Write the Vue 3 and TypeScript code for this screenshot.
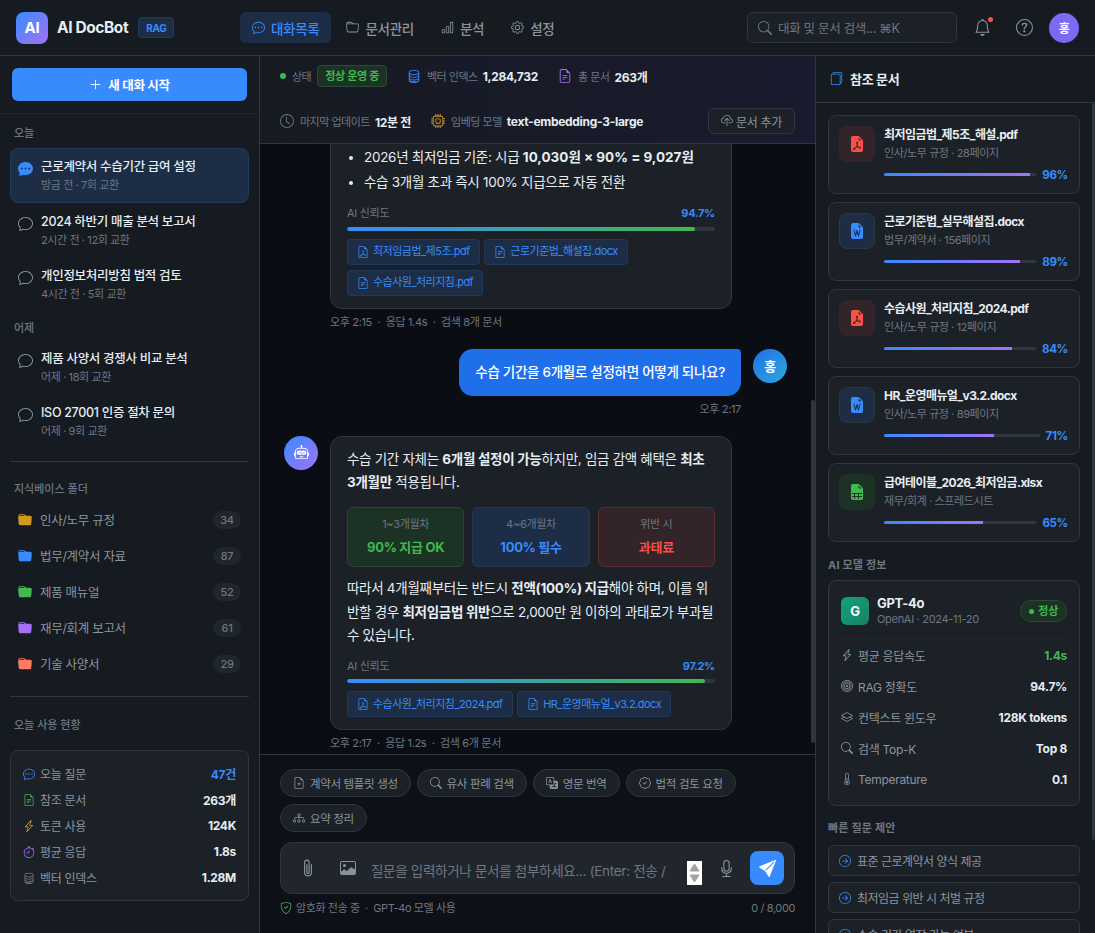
<template>
  <div class="app">
    <header class="topbar">
      <div class="brand">
        <div class="logo">AI</div>
        <span class="brand-name">AI DocBot</span>
        <span class="brand-tag">RAG</span>
      </div>
      <nav class="nav">
        <a v-for="n in navItems" :key="n.label" class="nav-item" :class="{ active: n.active }">
          <Icon :name="n.icon" />{{ n.label }}
        </a>
      </nav>
      <div class="top-right">
        <div class="search">
          <Icon name="search" />
          <span>대화 및 문서 검색... ⌘K</span>
        </div>
        <button class="icon-btn bell"><Icon name="bell" /><i class="bell-dot"></i></button>
        <button class="icon-btn"><Icon name="question" /></button>
        <div class="user-avatar">홍</div>
      </div>
    </header>

    <div class="body">
      <aside class="sidebar">
        <div class="new-wrap">
          <button class="new-btn"><Icon name="plus" />새 대화 시작</button>
        </div>
        <div class="side-content">
          <template v-for="(g, i) in chatGroups" :key="g.label">
            <div class="side-label" :class="{ later: i > 0 }">{{ g.label }}</div>
            <div
              v-for="c in g.items"
              :key="c.title"
              class="chat-item"
              :class="{ active: c.active }"
            >
              <Icon :name="c.active ? 'chatFill' : 'chat'" class="chat-ico" />
              <div class="chat-text">
                <div class="chat-title">{{ c.title }}</div>
                <div class="chat-sub">{{ c.sub }}</div>
              </div>
            </div>
          </template>

          <div class="side-divider first"></div>
          <div class="side-label folder-label">지식베이스 폴더</div>
          <div v-for="f in folders" :key="f.name" class="folder">
            <Icon name="folderFill" :style="{ color: f.color }" />
            <span class="folder-name">{{ f.name }}</span>
            <span class="folder-count">{{ f.count }}</span>
          </div>

          <div class="side-divider"></div>
          <div class="side-label usage-label">오늘 사용 현황</div>
          <div class="usage">
            <div v-for="u in usage" :key="u.label" class="usage-row">
              <Icon :name="u.icon" :style="{ color: u.color }" />
              <span class="usage-label-text">{{ u.label }}</span>
              <b :class="{ blue: u.blue }">{{ u.value }}</b>
            </div>
          </div>
        </div>
      </aside>

      <main class="center">
        <div class="status">
          <div class="st-item">
            <i class="st-dot"></i>
            <span class="st-label">상태</span>
            <span class="st-badge">정상 운영 중</span>
          </div>
          <div class="st-item">
            <Icon name="database" class="c-blue" />
            <span class="st-label">벡터 인덱스</span>
            <b>1,284,732</b>
          </div>
          <div class="st-item">
            <Icon name="fileText" class="c-purple" />
            <span class="st-label">총 문서</span>
            <b>263개</b>
          </div>
          <div class="st-item">
            <Icon name="clock" class="c-grey" />
            <span class="st-label">마지막 업데이트</span>
            <b>12분 전</b>
          </div>
          <div class="st-item">
            <Icon name="cpu" class="c-orange" />
            <span class="st-label">임베딩 모델</span>
            <b>text-embedding-3-large</b>
          </div>
          <button class="add-doc"><Icon name="cloudUp" />문서 추가</button>
        </div>

        <div class="chat-wrap">
          <div ref="chatEl" class="chat">
            <div class="msg user">
              <div class="msg-col">
                <div class="bubble-user">근로계약서에 수습기간을 넣을 때 급여는 얼마까지 낮출 수 있나요?</div>
                <div class="meta">오후 2:14</div>
              </div>
              <div class="avatar user-av">홍</div>
            </div>

            <div class="msg">
              <div class="avatar ai-av"><Icon name="robot" /></div>
              <div class="msg-col">
                <div class="bubble">
                  <p>수습기간 중 급여는 <strong>최저임금의 90%</strong>까지 감액할 수 있습니다. 다만 다음 조건을 모두 충족해야 합니다.</p>
                  <ul>
                    <li>1년 이상의 기간을 정한 근로계약일 것</li>
                    <li>단순노무직종에 해당하지 않을 것</li>
                    <li>수습 시작일로부터 3개월 이내일 것</li>
                    <li>2026년 최저임금 기준: 시급 <strong class="calc">10,030원 × 90% = 9,027원</strong></li>
                    <li>수습 3개월 초과 즉시 100% 지급으로 자동 전환</li>
                  </ul>
                  <div class="conf">
                    <div class="conf-head"><span>AI 신뢰도</span><b>94.7%</b></div>
                    <div class="conf-track"><div class="conf-fill" style="width: 94.7%"></div></div>
                  </div>
                  <div class="refs">
                    <span class="ref"><Icon name="pdf" />최저임금법_제5조.pdf</span>
                    <span class="ref"><Icon name="fileText" />근로기준법_해설집.docx</span>
                    <span class="ref"><Icon name="fileText" />수습사원_처리지침.pdf</span>
                  </div>
                </div>
                <div class="meta">오후 2:15 &nbsp;·&nbsp; 응답 1.4s &nbsp;·&nbsp; 검색 8개 문서</div>
              </div>
            </div>

            <div class="msg user">
              <div class="msg-col">
                <div class="bubble-user">수습 기간을 6개월로 설정하면 어떻게 되나요?</div>
                <div class="meta">오후 2:17</div>
              </div>
              <div class="avatar user-av">홍</div>
            </div>

            <div class="msg">
              <div class="avatar ai-av"><Icon name="robot" /></div>
              <div class="msg-col">
                <div class="bubble">
                  <p>수습 기간 자체는 <strong>6개월 설정이 가능</strong>하지만, 임금 감액 혜택은 <strong>최초 3개월만</strong> 적용됩니다.</p>
                  <div class="boxes">
                    <div v-for="b in boxes" :key="b.top" class="box" :class="b.kind">
                      <div class="box-top">{{ b.top }}</div>
                      <div class="box-main">{{ b.main }}</div>
                    </div>
                  </div>
                  <p>따라서 4개월째부터는 반드시 <strong>전액(100%) 지급</strong>해야 하며, 이를 위반할 경우 <strong>최저임금법 위반</strong>으로 2,000만 원 이하의 과태료가 부과될 수 있습니다.</p>
                  <div class="conf">
                    <div class="conf-head"><span>AI 신뢰도</span><b>97.2%</b></div>
                    <div class="conf-track"><div class="conf-fill" style="width: 97.2%"></div></div>
                  </div>
                  <div class="refs">
                    <span class="ref"><Icon name="pdf" />수습사원_처리지침_2024.pdf</span>
                    <span class="ref"><Icon name="fileText" />HR_운영매뉴얼_v3.2.docx</span>
                  </div>
                </div>
                <div class="meta">오후 2:17 &nbsp;·&nbsp; 응답 1.2s &nbsp;·&nbsp; 검색 6개 문서</div>
              </div>
            </div>
          </div>
          <i class="thumb chat-thumb"></i>
        </div>

        <div class="composer">
          <div class="quick">
            <button v-for="q in quickChips" :key="q.label" class="quick-chip">
              <Icon :name="q.icon" />{{ q.label }}
            </button>
          </div>
          <div class="input-box">
            <button class="in-btn clip"><Icon name="clip" /></button>
            <button class="in-btn"><Icon name="image" /></button>
            <div class="input-wrap">
              <textarea
                class="input"
                rows="1"
                placeholder="질문을 입력하거나 문서를 첨부하세요... (Enter: 전송 / Shift+Enter: 줄바꿈)"
              ></textarea>
              <div class="spinner">
                <svg viewBox="0 0 15 24" width="15" height="24">
                  <path d="M7.5 3 12 10H3z M3 14h9l-4.5 7z" fill="#a3a3a3" stroke="#a3a3a3" stroke-linejoin="round" />
                </svg>
              </div>
            </div>
            <button class="in-btn mic"><Icon name="mic" /></button>
            <button class="send"><Icon name="send" /></button>
          </div>
          <div class="foot">
            <span class="foot-left"><Icon name="shield" />암호화 전송 중 &nbsp;·&nbsp; GPT-4o 모델 사용</span>
            <span>0 / 8,000</span>
          </div>
        </div>
      </main>

      <aside class="right">
        <div class="right-head"><Icon name="journal" />참조 문서</div>
        <div class="right-scroll">
          <div v-for="d in docs" :key="d.name" class="doc">
            <div class="doc-icon" :class="d.kind"><Icon :name="d.icon" /></div>
            <div class="doc-info">
              <div class="doc-name">{{ d.name }}</div>
              <div class="doc-sub">{{ d.sub }}</div>
              <div class="doc-rel">
                <div class="doc-track">
                  <div class="doc-fill" :style="{ width: d.pct + '%' }"></div>
                </div>
                <b>{{ d.pct }}%</b>
              </div>
            </div>
          </div>

          <div class="right-label first">AI 모델 정보</div>
          <div class="model">
            <div class="model-top">
              <div class="model-logo">G</div>
              <div class="model-info">
                <div class="model-name">GPT-4o</div>
                <div class="model-sub">OpenAI · 2024-11-20</div>
              </div>
              <span class="model-state"><i></i>정상</span>
            </div>
            <div v-for="r in modelRows" :key="r.label" class="model-row">
              <Icon :name="r.icon" />
              <span class="model-key">{{ r.label }}</span>
              <b :class="{ green: r.green }">{{ r.value }}</b>
            </div>
          </div>

          <div class="right-label">빠른 질문 제안</div>
          <button v-for="s in suggestions" :key="s" class="suggest">
            <Icon name="arrowCircle" />{{ s }}
          </button>
        </div>
        <i class="thumb right-thumb"></i>
      </aside>
    </div>
  </div>
</template>

<script setup lang="ts">
import { h, onMounted, ref } from 'vue'
import type { FunctionalComponent } from 'vue'

// bootstrap-icons style paths, 16x16 grid
const icons: Record<string, string[]> = {
  chat: ['m2.165 15.803.02-.004c1.83-.363 2.948-.842 3.468-1.105A9 9 0 0 0 8 15c4.418 0 8-3.134 8-7s-3.582-7-8-7-8 3.134-8 7c0 1.76.743 3.37 1.97 4.6a10.4 10.4 0 0 1-.524 2.318l-.003.011a11 11 0 0 1-.244.637c-.079.186.074.394.273.362a22 22 0 0 0 .693-.125m.8-3.108a1 1 0 0 0-.287-.801C1.618 10.83 1 9.468 1 8c0-3.192 3.004-6 7-6s7 2.808 7 6-3.004 6-7 6a8 8 0 0 1-2.088-.272 1 1 0 0 0-.711.074c-.387.196-1.24.57-2.634.893a11 11 0 0 0 .398-2'],
  chatDots: ['M5 8a1 1 0 1 1-2 0 1 1 0 0 1 2 0m4 0a1 1 0 1 1-2 0 1 1 0 0 1 2 0m3 1a1 1 0 1 0 0-2 1 1 0 0 0 0 2', 'm2.165 15.803.02-.004c1.83-.363 2.948-.842 3.468-1.105A9 9 0 0 0 8 15c4.418 0 8-3.134 8-7s-3.582-7-8-7-8 3.134-8 7c0 1.76.743 3.37 1.97 4.6a10.4 10.4 0 0 1-.524 2.318l-.003.011a11 11 0 0 1-.244.637c-.079.186.074.394.273.362a22 22 0 0 0 .693-.125m.8-3.108a1 1 0 0 0-.287-.801C1.618 10.83 1 9.468 1 8c0-3.192 3.004-6 7-6s7 2.808 7 6-3.004 6-7 6a8 8 0 0 1-2.088-.272 1 1 0 0 0-.711.074c-.387.196-1.24.57-2.634.893a11 11 0 0 0 .398-2'],
  chatFill: ['M16 8c0 3.866-3.582 7-8 7a9 9 0 0 1-2.347-.306c-.584.296-1.925.864-4.181 1.234-.2.032-.352-.176-.273-.362.354-.836.674-1.95.77-2.966C.744 11.37 0 9.76 0 8c0-3.866 3.582-7 8-7s8 3.134 8 7M5 8a1 1 0 1 0-2 0 1 1 0 0 0 2 0m4 0a1 1 0 1 0-2 0 1 1 0 0 0 2 0m3 1a1 1 0 1 0 0-2 1 1 0 0 0 0 2'],
  folder: ['M.54 3.87.5 3a2 2 0 0 1 2-2h3.672a2 2 0 0 1 1.414.586l.828.828A2 2 0 0 0 9.828 3h3.982a2 2 0 0 1 1.992 2.181l-.637 7A2 2 0 0 1 13.174 14H2.826a2 2 0 0 1-1.991-1.819l-.637-7a2 2 0 0 1 .342-1.31zM2.19 4a1 1 0 0 0-.996 1.09l.637 7a1 1 0 0 0 .995.91h10.348a1 1 0 0 0 .995-.91l.637-7A1 1 0 0 0 13.81 4zm4.69-1.707A1 1 0 0 0 6.172 2H2.5a1 1 0 0 0-1 .981l.006.139q.323-.119.684-.12h5.396z'],
  folderFill: ['M9.828 3h3.982a2 2 0 0 1 1.992 2.181l-.637 7A2 2 0 0 1 13.174 14H2.825a2 2 0 0 1-1.991-1.819l-.637-7a2 2 0 0 1 .342-1.31L.5 3a2 2 0 0 1 2-2h3.672a2 2 0 0 1 1.414.586l.828.828A2 2 0 0 0 9.828 3m-8.322.12q.322-.119.684-.12h5.396l-.707-.707A1 1 0 0 0 6.172 2H2.5a1 1 0 0 0-1 .981z'],
  bars: ['M4 11H2v3h2zm5-4H7v7h2zm5-5v12h-2V2zm-2-1a1 1 0 0 0-1 1v12a1 1 0 0 0 1 1h2a1 1 0 0 0 1-1V2a1 1 0 0 0-1-1zM6 7a1 1 0 0 1 1-1h2a1 1 0 0 1 1 1v7a1 1 0 0 1-1 1H7a1 1 0 0 1-1-1zm-5 4a1 1 0 0 1 1-1h2a1 1 0 0 1 1 1v3a1 1 0 0 1-1 1H2a1 1 0 0 1-1-1z'],
  gear: ['M8 4.754a3.246 3.246 0 1 0 0 6.492 3.246 3.246 0 0 0 0-6.492M5.754 8a2.246 2.246 0 1 1 4.492 0 2.246 2.246 0 0 1-4.492 0', 'M9.796 1.343c-.527-1.79-3.065-1.79-3.592 0l-.094.319a.873.873 0 0 1-1.255.52l-.292-.16c-1.64-.892-3.433.902-2.54 2.541l.159.292a.873.873 0 0 1-.52 1.255l-.319.094c-1.79.527-1.79 3.065 0 3.592l.319.094a.873.873 0 0 1 .52 1.255l-.16.292c-.892 1.64.901 3.434 2.541 2.54l.292-.159a.873.873 0 0 1 1.255.52l.094.319c.527 1.79 3.065 1.79 3.592 0l.094-.319a.873.873 0 0 1 1.255-.52l.292.16c1.64.893 3.434-.902 2.54-2.541l-.159-.292a.873.873 0 0 1 .52-1.255l.319-.094c1.79-.527 1.79-3.065 0-3.592l-.319-.094a.873.873 0 0 1-.52-1.255l.16-.292c.893-1.64-.902-3.433-2.541-2.54l-.292.159a.873.873 0 0 1-1.255-.52zm-2.633.283c.246-.835 1.428-.835 1.674 0l.094.319a1.873 1.873 0 0 0 2.693 1.115l.291-.16c.764-.415 1.6.42 1.184 1.185l-.159.292a1.873 1.873 0 0 0 1.116 2.692l.318.094c.835.246.835 1.428 0 1.674l-.319.094a1.873 1.873 0 0 0-1.115 2.693l.16.291c.415.764-.42 1.6-1.185 1.184l-.291-.159a1.873 1.873 0 0 0-2.693 1.116l-.094.318c-.246.835-1.428.835-1.674 0l-.094-.319a1.873 1.873 0 0 0-2.692-1.115l-.292.16c-.764.415-1.6-.42-1.184-1.185l.159-.291A1.873 1.873 0 0 0 1.945 8.93l-.319-.094c-.835-.246-.835-1.428 0-1.674l.319-.094A1.873 1.873 0 0 0 3.06 4.377l-.16-.292c-.415-.764.42-1.6 1.185-1.184l.292.159a1.873 1.873 0 0 0 2.692-1.115z'],
  search: ['M11.742 10.344a6.5 6.5 0 1 0-1.397 1.398h-.001q.044.06.098.115l3.85 3.85a1 1 0 0 0 1.415-1.414l-3.85-3.85a1 1 0 0 0-.115-.1zM12 6.5a5.5 5.5 0 1 1-11 0 5.5 5.5 0 0 1 11 0'],
  bell: ['M8 16a2 2 0 0 0 2-2H6a2 2 0 0 0 2 2M8 1.918l-.797.161A4 4 0 0 0 4 6c0 .628-.134 2.197-.459 3.742-.16.767-.376 1.566-.663 2.258h10.244c-.287-.692-.502-1.49-.663-2.258C12.134 8.197 12 6.628 12 6a4 4 0 0 0-3.203-3.92zM14.22 12c.223.447.481.801.78 1H1c.299-.199.557-.553.78-1C2.68 10.2 3 6.88 3 6c0-2.42 1.72-4.44 4.005-4.901a1 1 0 1 1 1.99 0A5 5 0 0 1 13 6c0 .88.32 4.2 1.22 6'],
  question: ['M8 15A7 7 0 1 1 8 1a7 7 0 0 1 0 14m0 1A8 8 0 1 0 8 0a8 8 0 0 0 0 16', 'M5.255 5.786a.237.237 0 0 0 .241.247h.825c.138 0 .248-.113.266-.25.09-.656.54-1.134 1.342-1.134.686 0 1.314.343 1.314 1.168 0 .635-.374.927-.965 1.371-.673.489-1.206 1.06-1.168 1.987l.003.217a.25.25 0 0 0 .25.246h.811a.25.25 0 0 0 .25-.25v-.105c0-.718.273-.927 1.01-1.486.609-.463 1.244-.977 1.244-2.056 0-1.511-1.276-2.241-2.673-2.241-1.267 0-2.655.59-2.75 2.286m1.557 5.763c0 .533.425.927 1.01.927.609 0 1.028-.394 1.028-.927 0-.552-.42-.94-1.029-.94-.584 0-1.009.388-1.009.94'],
  plus: ['M8 2a.5.5 0 0 1 .5.5v5h5a.5.5 0 0 1 0 1h-5v5a.5.5 0 0 1-1 0v-5h-5a.5.5 0 0 1 0-1h5v-5A.5.5 0 0 1 8 2'],
  database: ['M4.318 2.687C5.234 2.271 6.536 2 8 2s2.766.27 3.682.687C12.644 3.125 13 3.627 13 4c0 .374-.356.875-1.318 1.313C10.766 5.729 9.464 6 8 6s-2.766-.27-3.682-.687C3.356 4.875 3 4.373 3 4c0-.374.356-.875 1.318-1.313M13 5.698V7c0 .374-.356.875-1.318 1.313C10.766 8.729 9.464 9 8 9s-2.766-.27-3.682-.687C3.356 7.875 3 7.373 3 7V5.698c.271.202.58.378.904.525C4.978 6.711 6.427 7 8 7s3.022-.289 4.096-.777A5 5 0 0 0 13 5.698M14 4c0-1.007-.875-1.755-1.904-2.223C11.022 1.289 9.573 1 8 1s-3.022.289-4.096.777C2.875 2.245 2 2.993 2 4v9c0 1.007.875 1.755 1.904 2.223C4.978 15.71 6.427 16 8 16s3.022-.289 4.096-.777C13.125 14.755 14 14.007 14 13zm-1 4.698V10c0 .374-.356.875-1.318 1.313C10.766 11.729 9.464 12 8 12s-2.766-.27-3.682-.687C3.356 10.875 3 10.373 3 10V8.698c.271.202.58.378.904.525C4.978 9.71 6.427 10 8 10s3.022-.289 4.096-.777A5 5 0 0 0 13 8.698m0 3V13c0 .374-.356.875-1.318 1.313C10.766 13.729 9.464 14 8 14s-2.766-.27-3.682-.687C3.356 13.875 3 13.373 3 13v-1.302c.271.202.58.378.904.525C4.978 12.71 6.427 13 8 13s3.022-.289 4.096-.777c.324-.147.633-.323.904-.525'],
  fileText: ['M5.5 7a.5.5 0 0 0 0 1h5a.5.5 0 0 0 0-1zM5 9.5a.5.5 0 0 1 .5-.5h5a.5.5 0 0 1 0 1h-5a.5.5 0 0 1-.5-.5m0 2a.5.5 0 0 1 .5-.5h2a.5.5 0 0 1 0 1h-2a.5.5 0 0 1-.5-.5', 'M9.5 0H4a2 2 0 0 0-2 2v12a2 2 0 0 0 2 2h8a2 2 0 0 0 2-2V4.5zm0 1v2A1.5 1.5 0 0 0 11 4.5h2V14a1 1 0 0 1-1 1H4a1 1 0 0 1-1-1V2a1 1 0 0 1 1-1z'],
  clock: ['M8 3.5a.5.5 0 0 0-1 0V9a.5.5 0 0 0 .252.434l3.5 2a.5.5 0 0 0 .496-.868L8 8.71zM8 16A8 8 0 1 0 8 0a8 8 0 0 0 0 16m7-8A7 7 0 1 1 1 8a7 7 0 0 1 14 0'],
  cpu: ['M5 0a.5.5 0 0 1 .5.5V2h1V.5a.5.5 0 0 1 1 0V2h1V.5a.5.5 0 0 1 1 0V2h1V.5a.5.5 0 0 1 1 0V2A2.5 2.5 0 0 1 14 4.5h1.5a.5.5 0 0 1 0 1H14v1h1.5a.5.5 0 0 1 0 1H14v1h1.5a.5.5 0 0 1 0 1H14v1h1.5a.5.5 0 0 1 0 1H14a2.5 2.5 0 0 1-2.5 2.5v1.5a.5.5 0 0 1-1 0V14h-1v1.5a.5.5 0 0 1-1 0V14h-1v1.5a.5.5 0 0 1-1 0V14h-1v1.5a.5.5 0 0 1-1 0V14A2.5 2.5 0 0 1 2 11.5H.5a.5.5 0 0 1 0-1H2v-1H.5a.5.5 0 0 1 0-1H2v-1H.5a.5.5 0 0 1 0-1H2v-1H.5a.5.5 0 0 1 0-1H2A2.5 2.5 0 0 1 4.5 2V.5A.5.5 0 0 1 5 0m-.5 3A1.5 1.5 0 0 0 3 4.5v7A1.5 1.5 0 0 0 4.5 13h7a1.5 1.5 0 0 0 1.5-1.5v-7A1.5 1.5 0 0 0 11.5 3zM5 6.5A1.5 1.5 0 0 1 6.5 5h3A1.5 1.5 0 0 1 11 6.5v3A1.5 1.5 0 0 1 9.5 11h-3A1.5 1.5 0 0 1 5 9.5zM6.5 6a.5.5 0 0 0-.5.5v3a.5.5 0 0 0 .5.5h3a.5.5 0 0 0 .5-.5v-3a.5.5 0 0 0-.5-.5z'],
  cloudUp: ['M4.406 1.342A5.53 5.53 0 0 1 8 0c2.69 0 4.923 2 5.166 4.579C14.758 4.804 16 6.137 16 7.773 16 9.569 14.502 11 12.687 11H10a.5.5 0 0 1 0-1h2.688C13.979 10 15 8.988 15 7.773c0-1.216-1.02-2.228-2.313-2.228h-.5v-.5C12.188 2.825 10.328 1 8 1a4.53 4.53 0 0 0-2.941 1.1c-.757.652-1.153 1.438-1.153 2.055v.448l-.445.049C2.064 4.805 1 5.952 1 7.318 1 8.785 2.23 10 3.781 10H6a.5.5 0 0 1 0 1H3.781C1.708 11 0 9.366 0 7.318c0-1.763 1.266-3.223 2.942-3.593.143-.863.698-1.723 1.464-2.383', 'M7.646 4.146a.5.5 0 0 1 .708 0l3 3a.5.5 0 0 1-.708.708L8.5 5.707V14.5a.5.5 0 0 1-1 0V5.707L5.354 7.854a.5.5 0 1 1-.708-.708z'],
  journal: ['M5 0h8a2 2 0 0 1 2 2v10a2 2 0 0 1-2 2 2 2 0 0 1-2 2H3a2 2 0 0 1-2-2V4a2 2 0 0 1 2-2h8a2 2 0 0 1 2 2v9a1 1 0 0 0 1-1V2a1 1 0 0 0-1-1H5a1 1 0 0 0-1 1H3a2 2 0 0 1 2-2M3 3a1 1 0 0 0-1 1v10a1 1 0 0 0 1 1h8a1 1 0 0 0 1-1V4a1 1 0 0 0-1-1z'],
  pdf: ['M14 14V4.5L9.5 0H4a2 2 0 0 0-2 2v12a2 2 0 0 0 2 2h8a2 2 0 0 0 2-2M9.5 3A1.5 1.5 0 0 0 11 4.5h2V14a1 1 0 0 1-1 1H4a1 1 0 0 1-1-1V2a1 1 0 0 1 1-1h5.5z', 'M4.603 14.087a.8.8 0 0 1-.438-.42c-.195-.388-.13-.776.08-1.102.198-.307.526-.568.897-.787a7.7 7.7 0 0 1 1.482-.645 20 20 0 0 0 1.062-2.227 7.7 7.7 0 0 1-.43-1.295c-.086-.4-.119-.796-.046-1.136.075-.354.274-.672.65-.823.192-.077.4-.12.602-.077a.7.7 0 0 1 .477.365c.088.164.12.356.127.538.007.188-.012.396-.047.614-.084.51-.27 1.134-.52 1.794a11 11 0 0 0 .98 1.686 5.8 5.8 0 0 1 1.334.05c.364.066.734.195.96.465.12.144.193.32.2.518.007.192-.047.382-.138.563a1.04 1.04 0 0 1-.354.416.86.86 0 0 1-.51.138c-.331-.014-.654-.196-.933-.417a5.7 5.7 0 0 1-.911-.95 11.7 11.7 0 0 0-1.997.406 11.3 11.3 0 0 1-1.02 1.51c-.292.35-.609.656-.927.787a.8.8 0 0 1-.58.029m1.379-1.901q-.25.115-.459.238c-.328.194-.541.383-.647.547-.094.145-.096.25-.04.361q.016.032.026.044l.035-.012c.137-.056.355-.235.635-.572a8 8 0 0 0 .45-.606m1.64-1.33a13 13 0 0 1 1.01-.193 12 12 0 0 1-.51-.858 21 21 0 0 1-.5 1.05zm2.446.45q.226.245.435.41c.24.19.407.253.498.256a.1.1 0 0 0 .07-.015.3.3 0 0 0 .094-.125.44.44 0 0 0 .059-.2.1.1 0 0 0-.026-.063c-.052-.062-.2-.152-.518-.209a4 4 0 0 0-.612-.053zM8.078 7.8a7 7 0 0 0 .2-.828q.046-.282.038-.465a.6.6 0 0 0-.032-.198.5.5 0 0 0-.145.04c-.087.035-.158.106-.196.283-.04.192-.03.469.046.822q.036.167.09.346z'],
  pdfFill: ['M5.523 12.424q.21-.124.459-.238a8 8 0 0 1-.45.606c-.28.337-.498.516-.635.572l-.035.012a.3.3 0 0 1-.026-.044c-.056-.11-.054-.216.04-.36.106-.165.319-.354.647-.548m2.455-1.647q-.178.037-.356.078a21 21 0 0 0 .5-1.05 12 12 0 0 0 .51.858q-.326.048-.654.114m2.525.939a4 4 0 0 1-.435-.41q.344.007.612.054c.317.057.466.147.518.209a.1.1 0 0 1 .026.064.44.44 0 0 1-.06.2.3.3 0 0 1-.094.124.1.1 0 0 1-.069.015c-.09-.003-.258-.066-.498-.256M8.278 6.97c-.04.244-.108.524-.2.829a5 5 0 0 1-.089-.346c-.076-.353-.087-.63-.046-.822.038-.177.11-.248.196-.283a.5.5 0 0 1 .145-.04c.013.03.028.092.032.198q.008.183-.038.465z', 'M4 0h5.293A1 1 0 0 1 10 .293L13.707 4a1 1 0 0 1 .293.707V14a2 2 0 0 1-2 2H4a2 2 0 0 1-2-2V2a2 2 0 0 1 2-2m5.5 1.5v2a1 1 0 0 0 1 1h2zM4.165 13.668c.09.18.23.343.438.419.207.075.412.04.58-.03.318-.13.635-.436.926-.786.333-.401.683-.927 1.021-1.51a11.7 11.7 0 0 1 1.997-.406c.3.383.61.713.91.95.28.22.603.403.934.417a.86.86 0 0 0 .51-.138c.155-.101.27-.247.354-.416.09-.181.145-.37.138-.563a.84.84 0 0 0-.2-.518c-.226-.27-.596-.4-.96-.465a5.8 5.8 0 0 0-1.335-.05 11 11 0 0 1-.98-1.686c.25-.66.437-1.284.52-1.794.036-.218.055-.426.048-.614a1.2 1.2 0 0 0-.127-.538.7.7 0 0 0-.477-.365c-.202-.043-.41 0-.601.077-.377.15-.576.47-.651.823-.073.34-.04.736.046 1.136.088.406.238.848.43 1.295a20 20 0 0 1-1.062 2.227 7.7 7.7 0 0 0-1.482.645c-.37.22-.699.48-.897.787-.21.326-.275.714-.08 1.102'],
  word: ['M9.293 0H4a2 2 0 0 0-2 2v12a2 2 0 0 0 2 2h8a2 2 0 0 0 2-2V4.707A1 1 0 0 0 13.707 4L10 .293A1 1 0 0 0 9.293 0M9.5 3.5v-2l3 3h-2a1 1 0 0 1-1-1M5.485 6.879l1.036 4.144.997-3.655a.5.5 0 0 1 .964 0l.997 3.655 1.036-4.144a.5.5 0 0 1 .97.242l-1.5 6a.5.5 0 0 1-.967.01L8 9.402l-1.018 3.73a.5.5 0 0 1-.967-.01l-1.5-6a.5.5 0 1 1 .97-.242z'],
  sheet: ['M6 12v-2h3v2z', 'M9.293 0H4a2 2 0 0 0-2 2v12a2 2 0 0 0 2 2h8a2 2 0 0 0 2-2V4.707A1 1 0 0 0 13.707 4L10 .293A1 1 0 0 0 9.293 0M9.5 3.5v-2l3 3h-2a1 1 0 0 1-1-1M3 9h10v1h-3v2h3v1h-3v2H9v-2H6v2H5v-2H3v-1h2v-2H3z'],
  bolt: ['M11.251.068a.5.5 0 0 1 .227.58L9.677 6.5H13a.5.5 0 0 1 .364.843l-8 8.5a.5.5 0 0 1-.842-.49L6.323 9.5H3a.5.5 0 0 1-.364-.843l8-8.5a.5.5 0 0 1 .615-.09zM4.157 8.5H7a.5.5 0 0 1 .478.647L6.11 13.59l5.732-6.09H9a.5.5 0 0 1-.478-.647L9.89 2.41z'],
  stopwatch: ['M8.5 5.6a.5.5 0 1 0-1 0v2.9h-3a.5.5 0 0 0 0 1H8a.5.5 0 0 0 .5-.5z', 'M6.5 1A.5.5 0 0 1 7 .5h2a.5.5 0 0 1 0 1v.57c1.36.196 2.594.78 3.584 1.64l.012-.013.354-.354-.354-.353a.5.5 0 0 1 .707-.708l1.414 1.415a.5.5 0 1 1-.707.707l-.353-.354-.354.354-.012.012A7 7 0 1 1 7 2.071V1.5a.5.5 0 0 1-.5-.5M8 3a6 6 0 1 0 .001 12.001A6 6 0 0 0 8 3'],
  bullseye: ['M8 15A7 7 0 1 1 8 1a7 7 0 0 1 0 14m0 1A8 8 0 1 0 8 0a8 8 0 0 0 0 16', 'M8 13A5 5 0 1 1 8 3a5 5 0 0 1 0 10m0 1A6 6 0 1 0 8 2a6 6 0 0 0 0 12', 'M8 11a3 3 0 1 1 0-6 3 3 0 0 1 0 6m0 1a4 4 0 1 0 0-8 4 4 0 0 0 0 8', 'M9.5 8a1.5 1.5 0 1 1-3 0 1.5 1.5 0 0 1 3 0'],
  layers: ['M8.235 1.559a.5.5 0 0 0-.47 0l-7.5 4a.5.5 0 0 0 0 .882L3.188 8 .264 9.559a.5.5 0 0 0 0 .882l7.5 4a.5.5 0 0 0 .47 0l7.5-4a.5.5 0 0 0 0-.882L12.813 8l2.922-1.559a.5.5 0 0 0 0-.882zm3.515 7.008L14.438 10 8 13.433 1.562 10 4.25 8.567l3.515 1.874a.5.5 0 0 0 .47 0zM8 9.433 1.562 6 8 2.567 14.438 6z'],
  thermo: ['M9.5 12.5a1.5 1.5 0 1 1-2-1.415V6.5a.5.5 0 0 1 1 0v4.585a1.5 1.5 0 0 1 1 1.415', 'M5.5 2.5a2.5 2.5 0 0 1 5 0v7.55a3.5 3.5 0 1 1-5 0zM8 1a1.5 1.5 0 0 0-1.5 1.5v7.987l-.167.15a2.5 2.5 0 1 0 3.333 0l-.166-.15V2.5A1.5 1.5 0 0 0 8 1'],
  arrowCircle: ['M1 8a7 7 0 1 0 14 0A7 7 0 0 0 1 8m15 0A8 8 0 1 1 0 8a8 8 0 0 1 16 0M4.5 7.5a.5.5 0 0 0 0 1h5.793l-2.147 2.146a.5.5 0 0 0 .708.708l3-3a.5.5 0 0 0 0-.708l-3-3a.5.5 0 1 0-.708.708L10.293 7.5z'],
  filePlus: ['M8 6.5a.5.5 0 0 1 .5.5v1.5H10a.5.5 0 0 1 0 1H8.5V11a.5.5 0 0 1-1 0V9.5H6a.5.5 0 0 1 0-1h1.5V7a.5.5 0 0 1 .5-.5', 'M14 4.5V14a2 2 0 0 1-2 2H4a2 2 0 0 1-2-2V2a2 2 0 0 1 2-2h5.5zm-3 0A1.5 1.5 0 0 1 9.5 3V1H4a1 1 0 0 0-1 1v12a1 1 0 0 0 1 1h8a1 1 0 0 0 1-1V4.5z'],
  translate: ['M4.545 6.714 4.11 8H3l1.862-5h1.284L8 8H6.833l-.435-1.286zm1.634-.736L5.5 3.956h-.049l-.679 2.022z', 'M0 2a2 2 0 0 1 2-2h7a2 2 0 0 1 2 2v3h3a2 2 0 0 1 2 2v7a2 2 0 0 1-2 2H7a2 2 0 0 1-2-2v-3H2a2 2 0 0 1-2-2zm2-1a1 1 0 0 0-1 1v7a1 1 0 0 0 1 1h7a1 1 0 0 0 1-1V2a1 1 0 0 0-1-1zm7.138 9.995q.289.451.63.846c-.748.575-1.673 1.001-2.768 1.292.178.217.451.635.555.867 1.125-.359 2.08-.844 2.886-1.494.777.665 1.739 1.165 2.93 1.472.133-.254.414-.673.629-.89-1.125-.253-2.057-.694-2.82-1.284.681-.747 1.222-1.651 1.621-2.757H14V8h-3v1.047h.765c-.318.844-.74 1.546-1.272 2.13a6 6 0 0 1-.415-.492 2 2 0 0 1-.94.31'],
  patch: ['M10.354 6.146a.5.5 0 0 1 0 .708l-3 3a.5.5 0 0 1-.708 0l-1.5-1.5a.5.5 0 1 1 .708-.708L7 8.793l2.646-2.647a.5.5 0 0 1 .708 0z', 'm10.273 2.513-.921-.944.715-.698.622.637.89-.011a2.89 2.89 0 0 1 2.924 2.924l-.01.89.636.622a2.89 2.89 0 0 1 0 4.134l-.637.622.011.89a2.89 2.89 0 0 1-2.924 2.924l-.89-.01-.622.636a2.89 2.89 0 0 1-4.134 0l-.622-.637-.89.011a2.89 2.89 0 0 1-2.924-2.924l.01-.89-.636-.622a2.89 2.89 0 0 1 0-4.134l.637-.622-.011-.89a2.89 2.89 0 0 1 2.924-2.924l.89.01.622-.636a2.89 2.89 0 0 1 4.134 0l-.715.698a1.89 1.89 0 0 0-2.704 0l-.92.944-1.32-.016a1.89 1.89 0 0 0-1.911 1.912l.016 1.318-.944.921a1.89 1.89 0 0 0 0 2.704l.944.92-.016 1.32a1.89 1.89 0 0 0 1.912 1.911l1.318-.016.921.944a1.89 1.89 0 0 0 2.704 0l.92-.944 1.32.016a1.89 1.89 0 0 0 1.911-1.912l-.016-1.318.944-.921a1.89 1.89 0 0 0 0-2.704l-.944-.92.016-1.32a1.89 1.89 0 0 0-1.912-1.911z'],
  diagram: ['M6 3.5A1.5 1.5 0 0 1 7.5 2h1A1.5 1.5 0 0 1 10 3.5v1A1.5 1.5 0 0 1 8.5 6v1H14a.5.5 0 0 1 .5.5v1a.5.5 0 0 1-1 0V8h-5v.5a.5.5 0 0 1-1 0V8h-5v.5a.5.5 0 0 1-1 0v-1A.5.5 0 0 1 2 7h5.5V6A1.5 1.5 0 0 1 6 4.5zM8.5 5a.5.5 0 0 0 .5-.5v-1a.5.5 0 0 0-.5-.5h-1a.5.5 0 0 0-.5.5v1a.5.5 0 0 0 .5.5zM0 11.5A1.5 1.5 0 0 1 1.5 10h1A1.5 1.5 0 0 1 4 11.5v1A1.5 1.5 0 0 1 2.5 14h-1A1.5 1.5 0 0 1 0 12.5zm1.5-.5a.5.5 0 0 0-.5.5v1a.5.5 0 0 0 .5.5h1a.5.5 0 0 0 .5-.5v-1a.5.5 0 0 0-.5-.5zm4.5.5A1.5 1.5 0 0 1 7.5 10h1a1.5 1.5 0 0 1 1.5 1.5v1A1.5 1.5 0 0 1 8.5 14h-1A1.5 1.5 0 0 1 6 12.5zm1.5-.5a.5.5 0 0 0-.5.5v1a.5.5 0 0 0 .5.5h1a.5.5 0 0 0 .5-.5v-1a.5.5 0 0 0-.5-.5zm4.5.5a1.5 1.5 0 0 1 1.5-1.5h1a1.5 1.5 0 0 1 1.5 1.5v1a1.5 1.5 0 0 1-1.5 1.5h-1a1.5 1.5 0 0 1-1.5-1.5zm1.5-.5a.5.5 0 0 0-.5.5v1a.5.5 0 0 0 .5.5h1a.5.5 0 0 0 .5-.5v-1a.5.5 0 0 0-.5-.5z'],
  clip: ['M4.5 3a2.5 2.5 0 0 1 5 0v9a1.5 1.5 0 0 1-3 0V5a.5.5 0 0 1 1 0v7a.5.5 0 0 0 1 0V3a1.5 1.5 0 1 0-3 0v9a2.5 2.5 0 0 0 5 0V5a.5.5 0 0 1 1 0v7a3.5 3.5 0 1 1-7 0z'],
  image: ['M6.002 5.5a1.5 1.5 0 1 1-3 0 1.5 1.5 0 0 1 3 0', 'M2.002 1a2 2 0 0 0-2 2v10a2 2 0 0 0 2 2h12a2 2 0 0 0 2-2V3a2 2 0 0 0-2-2zm12 1a1 1 0 0 1 1 1v6.5l-3.777-1.947a.5.5 0 0 0-.577.093l-3.71 3.71-2.66-1.772a.5.5 0 0 0-.63.062L1.002 12V3a1 1 0 0 1 1-1z', 'M1 12l2.646-2.354a.5.5 0 0 1 .63-.062l2.66 1.772 3.71-3.71a.5.5 0 0 1 .577-.093L15 9.5V13a1 1 0 0 1-1 1H2a1 1 0 0 1-1-1z'],
  mic: ['M3.5 6.5A.5.5 0 0 1 4 7v1a4 4 0 0 0 8 0V7a.5.5 0 0 1 1 0v1a5 5 0 0 1-4.5 4.975V15h3a.5.5 0 0 1 0 1h-7a.5.5 0 0 1 0-1h3v-2.025A5 5 0 0 1 3 8V7a.5.5 0 0 1 .5-.5', 'M10 8a2 2 0 1 1-4 0V3a2 2 0 1 1 4 0zM8 0a3 3 0 0 0-3 3v5a3 3 0 0 0 6 0V3a3 3 0 0 0-3-3'],
  send: ['M15.964.686a.5.5 0 0 0-.65-.65L.767 5.855H.766l-.452.18a.5.5 0 0 0-.082.887l.41.26.001.002 4.995 3.178 3.178 4.995.002.002.26.41a.5.5 0 0 0 .886-.083zm-1.833 1.89L6.637 10.07l-.215-.338a.5.5 0 0 0-.154-.154l-.338-.215 7.494-7.494 1.178-.471z'],
  shield: ['M5.338 1.59a61 61 0 0 0-2.837.856.48.48 0 0 0-.328.39c-.554 4.157.726 7.19 2.253 9.188a10.7 10.7 0 0 0 2.287 2.233c.346.244.652.42.893.533q.18.085.293.118a1 1 0 0 0 .101.025 1 1 0 0 0 .1-.025q.114-.034.294-.118c.24-.113.547-.29.893-.533a10.7 10.7 0 0 0 2.287-2.233c1.527-1.997 2.807-5.031 2.253-9.188a.48.48 0 0 0-.328-.39c-.651-.213-1.75-.56-2.837-.855C9.552 1.29 8.531 1.067 8 1.067c-.53 0-1.552.223-2.662.524zM5.072.56C6.157.265 7.31 0 8 0s1.843.265 2.928.56c1.11.3 2.229.655 2.887.87a1.54 1.54 0 0 1 1.044 1.262c.596 4.477-.787 7.795-2.465 9.99a11.8 11.8 0 0 1-2.517 2.453 7 7 0 0 1-1.048.625c-.28.132-.581.24-.829.24s-.548-.108-.829-.24a7 7 0 0 1-1.048-.625 11.8 11.8 0 0 1-2.517-2.453C1.928 10.487.545 7.169 1.141 2.692A1.54 1.54 0 0 1 2.185 1.43 63 63 0 0 1 5.072.56', 'M10.854 5.146a.5.5 0 0 1 0 .708l-3 3a.5.5 0 0 1-.708 0l-1.5-1.5a.5.5 0 1 1 .708-.708L7.5 7.793l2.646-2.647a.5.5 0 0 1 .708 0'],
  robot: ['M6 12.5a.5.5 0 0 1 .5-.5h3a.5.5 0 0 1 0 1h-3a.5.5 0 0 1-.5-.5M3 8.062C3 6.76 4.235 5.765 5.53 5.886a26.6 26.6 0 0 0 4.94 0C11.765 5.765 13 6.76 13 8.062v1.157a.93.93 0 0 1-.765.935c-.845.147-2.34.346-4.235.346s-3.39-.2-4.235-.346A.93.93 0 0 1 3 9.219zm4.542-.827a.25.25 0 0 0-.217.068l-.92.9a25 25 0 0 1-1.871-.183.25.25 0 0 0-.068.495c.55.076 1.232.149 2.02.193a.25.25 0 0 0 .189-.071l.754-.736.847 1.71a.25.25 0 0 0 .404.062l.932-.97a25 25 0 0 0 1.922-.188.25.25 0 0 0-.068-.495c-.538.074-1.207.145-1.98.189a.25.25 0 0 0-.166.076l-.754.785-.842-1.7a.25.25 0 0 0-.182-.135', 'M8.5 1.866a1 1 0 1 0-1 0V3h-2A4.5 4.5 0 0 0 1 7.5V8a1 1 0 0 0-1 1v2a1 1 0 0 0 1 1v1a2 2 0 0 0 2 2h10a2 2 0 0 0 2-2v-1a1 1 0 0 0 1-1V9a1 1 0 0 0-1-1v-.5A4.5 4.5 0 0 0 10.5 3h-2zM14 7.5V13a1 1 0 0 1-1 1H3a1 1 0 0 1-1-1V7.5A3.5 3.5 0 0 1 5.5 4h5A3.5 3.5 0 0 1 14 7.5'],
}

const Icon: FunctionalComponent<{ name: string }> = (props) =>
  h(
    'svg',
    { viewBox: '0 0 16 16', width: '1em', height: '1em', fill: 'currentColor', class: 'bi' },
    icons[props.name].map((d) => h('path', { d })),
  )
Icon.props = ['name']

const navItems = [
  { label: '대화목록', icon: 'chatDots', active: true },
  { label: '문서관리', icon: 'folder' },
  { label: '분석', icon: 'bars' },
  { label: '설정', icon: 'gear' },
]

const chatGroups = [
  {
    label: '오늘',
    items: [
      { title: '근로계약서 수습기간 급여 설정', sub: '방금 전 · 7회 교환', active: true },
      { title: '2024 하반기 매출 분석 보고서', sub: '2시간 전 · 12회 교환' },
      { title: '개인정보처리방침 법적 검토', sub: '4시간 전 · 5회 교환' },
    ],
  },
  {
    label: '어제',
    items: [
      { title: '제품 사양서 경쟁사 비교 분석', sub: '어제 · 18회 교환' },
      { title: 'ISO 27001 인증 절차 문의', sub: '어제 · 9회 교환' },
    ],
  },
]

const folders = [
  { name: '인사/노무 규정', count: 34, color: '#d29922' },
  { name: '법무/계약서 자료', count: 87, color: '#388bfd' },
  { name: '제품 매뉴얼', count: 52, color: '#3fb950' },
  { name: '재무/회계 보고서', count: 61, color: '#a371f7' },
  { name: '기술 사양서', count: 29, color: '#ff7b60' },
]

const usage = [
  { label: '오늘 질문', value: '47건', icon: 'chatDots', color: '#388bfd', blue: true },
  { label: '참조 문서', value: '263개', icon: 'fileText', color: '#3fb950' },
  { label: '토큰 사용', value: '124K', icon: 'bolt', color: '#d29922' },
  { label: '평균 응답', value: '1.8s', icon: 'stopwatch', color: '#a371f7' },
  { label: '벡터 인덱스', value: '1.28M', icon: 'database', color: '#6e7681' },
]

const boxes = [
  { top: '1~3개월차', main: '90% 지급 OK', kind: 'ok' },
  { top: '4~6개월차', main: '100% 필수', kind: 'must' },
  { top: '위반 시', main: '과태료', kind: 'bad' },
]

const quickChips = [
  { label: '계약서 템플릿 생성', icon: 'filePlus' },
  { label: '유사 판례 검색', icon: 'search' },
  { label: '영문 번역', icon: 'translate' },
  { label: '법적 검토 요청', icon: 'patch' },
  { label: '요약 정리', icon: 'diagram' },
]

const docs = [
  { name: '최저임금법_제5조_해설.pdf', sub: '인사/노무 규정 · 28페이지', pct: 96, kind: 'pdf', icon: 'pdfFill' },
  { name: '근로기준법_실무해설집.docx', sub: '법무/계약서 · 156페이지', pct: 89, kind: 'doc', icon: 'word' },
  { name: '수습사원_처리지침_2024.pdf', sub: '인사/노무 규정 · 12페이지', pct: 84, kind: 'pdf', icon: 'pdfFill' },
  { name: 'HR_운영매뉴얼_v3.2.docx', sub: '인사/노무 규정 · 89페이지', pct: 71, kind: 'doc', icon: 'word' },
  { name: '급여테이블_2026_최저임금.xlsx', sub: '재무/회계 · 스프레드시트', pct: 65, kind: 'xls', icon: 'sheet' },
]

const modelRows = [
  { label: '평균 응답속도', value: '1.4s', icon: 'bolt', green: true },
  { label: 'RAG 정확도', value: '94.7%', icon: 'bullseye' },
  { label: '컨텍스트 윈도우', value: '128K tokens', icon: 'layers' },
  { label: '검색 Top-K', value: 'Top 8', icon: 'search' },
  { label: 'Temperature', value: '0.1', icon: 'thermo' },
]

const suggestions = ['표준 근로계약서 양식 제공', '최저임금 위반 시 처벌 규정', '수습 기간 연장 가능 여부', '퇴직금 산정 기준 안내']

const chatEl = ref<HTMLElement | null>(null)

onMounted(() => {
  if (chatEl.value) chatEl.value.scrollTop = chatEl.value.scrollHeight
})
</script>

<style>
html,
body {
  margin: 0;
  background: #0d1117;
}
</style>

<style scoped>
.app {
  width: 1095px;
  height: 933px;
  overflow: hidden;
  display: flex;
  flex-direction: column;
  background: #0d1117;
  color: #e6edf3;
  font-family: Inter, 'Noto Sans CJK KR', sans-serif;
  font-size: 13px;
  letter-spacing: -0.3px;
}
.bi {
  flex-shrink: 0;
  display: block;
}
button,
textarea {
  font-family: inherit;
  letter-spacing: inherit;
  cursor: pointer;
}

/* top bar */
.topbar {
  height: 56px;
  box-sizing: border-box;
  flex-shrink: 0;
  display: flex;
  align-items: center;
  padding: 0 16px;
  background: #161b22;
  border-bottom: 1px solid #30363d;
}
.brand {
  display: flex;
  align-items: center;
  width: 224px;
}
.logo {
  width: 32px;
  height: 32px;
  border-radius: 8px;
  background: linear-gradient(135deg, #388bfd, #a371f7);
  display: flex;
  align-items: center;
  justify-content: center;
  font-size: 15px;
  font-weight: 700;
  color: #fff;
}
.brand-name {
  margin-left: 9px;
  font-size: 15.5px;
  font-weight: 700;
  letter-spacing: -0.4px;
}
.brand-tag {
  margin-left: 10px;
  height: 21px;
  box-sizing: border-box;
  display: flex;
  align-items: center;
  padding: 0 7px;
  border: 1px solid #1f3a5f;
  background: #1c2d45;
  border-radius: 4px;
  font-size: 10px;
  font-weight: 700;
  color: #388bfd;
}
.nav {
  display: flex;
  gap: 3px;
}
.nav-item {
  height: 31px;
  display: flex;
  align-items: center;
  gap: 6px;
  padding: 0 12px;
  border-radius: 6px;
  font-size: 13.5px;
  font-weight: 500;
  color: #8b949e;
}
.nav-item .bi {
  font-size: 13px;
}
.nav-item.active {
  background: #1c2d45;
  color: #388bfd;
}
.top-right {
  margin-left: auto;
  display: flex;
  align-items: center;
}
.search {
  width: 210px;
  height: 31px;
  box-sizing: border-box;
  display: flex;
  align-items: center;
  gap: 6px;
  padding: 0 10px;
  background: #1c2128;
  border: 1px solid #30363d;
  border-radius: 6px;
  font-size: 12.5px;
  color: #6e7681;
}
.search .bi {
  font-size: 14px;
}
.icon-btn {
  position: relative;
  width: 34px;
  height: 34px;
  margin-left: 8px;
  padding: 0;
  border: 0;
  background: none;
  color: #8b949e;
  font-size: 17px;
  display: flex;
  align-items: center;
  justify-content: center;
}
.bell-dot {
  position: absolute;
  top: 6px;
  right: 6px;
  width: 5px;
  height: 5px;
  border-radius: 50%;
  background: #f85149;
}
.user-avatar {
  width: 30px;
  height: 30px;
  margin-left: 8px;
  border-radius: 50%;
  background: #7c6af5;
  display: flex;
  align-items: center;
  justify-content: center;
  font-size: 12px;
  font-weight: 700;
  color: #fff;
}

.body {
  flex: 1;
  min-height: 0;
  display: flex;
}

/* left column */
.sidebar {
  width: 260px;
  box-sizing: border-box;
  flex-shrink: 0;
  background: #161b22;
  border-right: 1px solid #30363d;
  display: flex;
  flex-direction: column;
}
.new-wrap {
  padding: 12px;
  border-bottom: 1px solid #21262d;
}
.new-btn {
  width: 100%;
  height: 33px;
  border: 0;
  border-radius: 6px;
  background: #388bfd;
  color: #fff;
  font-size: 12.5px;
  font-weight: 700;
  display: flex;
  align-items: center;
  justify-content: center;
  gap: 6px;
}
.new-btn .bi {
  font-size: 13px;
}
.side-content {
  padding: 0 10px;
}
.side-label {
  padding: 12px 4px 8px;
  font-size: 11px;
  font-weight: 500;
  color: #6e7681;
  line-height: 14px;
  letter-spacing: 0;
}
.side-label.later {
  padding: 9px 4px 5px;
}
.chat-item {
  display: flex;
  gap: 8px;
  padding: 9px 7px;
  height: 54.5px;
  box-sizing: border-box;
  border: 1px solid transparent;
  border-radius: 8px;
}
.chat-item.active {
  background: #1c2d45;
  border-color: #1f3a5f;
}
.chat-ico {
  margin-top: 3px;
  font-size: 15px;
  color: #8b949e;
}
.chat-item.active .chat-ico {
  color: #388bfd;
}
.chat-title {
  font-size: 12.5px;
  font-weight: 500;
  line-height: 18px;
  white-space: nowrap;
}
.chat-sub {
  font-size: 11px;
  line-height: 18px;
  letter-spacing: -0.4px;
  color: #6e7681;
}
.side-divider {
  height: 1px;
  background: #30363d;
  margin-top: 14px;
}
.side-divider.first {
  margin-top: 12px;
}
.side-label.folder-label {
  padding: 20px 4px 6px;
}
.folder {
  height: 36px;
  box-sizing: border-box;
  display: flex;
  align-items: center;
  gap: 8px;
  padding: 0 8px;
  font-size: 12.5px;
  color: #8b949e;
}
.folder .bi {
  font-size: 14px;
}
.folder-name {
  flex: 1;
}
.folder-count {
  min-width: 14px;
  padding: 1px 7px;
  border-radius: 9px;
  background: #21262d;
  font-size: 11px;
  font-weight: 500;
  color: #6e7681;
  line-height: 16px;
  text-align: center;
}
.side-label.usage-label {
  padding: 21px 4px 18px;
}
.usage {
  padding: 10px 12px 9px;
  border: 1px solid #30363d;
  border-radius: 8px;
  background: #1c2128;
}
.usage-row {
  height: 26px;
  display: flex;
  align-items: center;
  gap: 5px;
  font-size: 12px;
  color: #8b949e;
}
.usage-row .bi {
  font-size: 12px;
}
.usage-label-text {
  flex: 1;
}
.usage-row b {
  font-weight: 700;
  color: #e6edf3;
}
.usage-row b.blue {
  color: #388bfd;
}

/* center column */
.center {
  flex: 1;
  min-width: 0;
  display: flex;
  flex-direction: column;
  background: #0d1117;
}
.status {
  flex-shrink: 0;
  height: 88px;
  box-sizing: border-box;
  display: flex;
  flex-wrap: wrap;
  align-items: center;
  align-content: flex-start;
  gap: 21px 20px;
  padding: 9px 20px 0;
  background: linear-gradient(90deg, #161b22, #1a1a2e);
  border-bottom: 1px solid #30363d;
}
.st-item {
  display: flex;
  align-items: center;
  gap: 6px;
  font-size: 11px;
  color: #6e7681;
}
.st-item .bi {
  font-size: 14px;
}
.st-label {
  letter-spacing: -0.5px;
}
.st-item b {
  margin-left: -1px;
  font-size: 12px;
  font-weight: 700;
  color: #e6edf3;
}
.st-dot {
  width: 6px;
  height: 6px;
  border-radius: 50%;
  background: #3fb950;
}
.st-badge {
  padding: 2px 7px;
  background: #1c3224;
  border: 1px solid #2a4a33;
  border-radius: 4px;
  font-size: 11px;
  font-weight: 700;
  color: #3fb950;
  line-height: 16px;
}
.c-blue {
  color: #388bfd;
}
.c-purple {
  color: #a371f7;
}
.c-grey {
  color: #6e7681;
}
.c-orange {
  color: #d29922;
}
.add-doc {
  margin-left: auto;
  height: 26px;
  display: flex;
  align-items: center;
  gap: 3px;
  padding: 0 12px;
  background: #1c2128;
  border: 1px solid #30363d;
  border-radius: 6px;
  font-size: 12px;
  color: #8b949e;
}

.chat-wrap {
  position: relative;
  flex: 1;
  min-height: 0;
  display: flex;
}
.chat {
  flex: 1;
  min-width: 0;
  overflow-y: auto;
  padding: 20px 28px 4px 24px;
  display: flex;
  flex-direction: column;
  gap: 20px;
  background: #0a0e14;
}
.thumb {
  position: absolute;
  right: 0;
  background: #30363d;
  border-radius: 2px;
}
.chat-thumb {
  top: 256px;
  width: 4px;
  height: 343px;
}
.msg {
  display: flex;
  gap: 12px;
  flex-shrink: 0;
}
.msg.user {
  justify-content: flex-end;
}
.msg-col {
  max-width: 402px;
  display: flex;
  flex-direction: column;
}
.msg.user .msg-col {
  align-items: flex-end;
}
.avatar {
  width: 34px;
  height: 34px;
  flex-shrink: 0;
  border-radius: 50%;
  display: flex;
  align-items: center;
  justify-content: center;
  font-size: 13px;
  font-weight: 700;
  color: #fff;
}
.user-av {
  background: linear-gradient(135deg, #1f6feb, #2ea8d9);
}
.ai-av {
  background: linear-gradient(135deg, #388bfd, #a371f7);
  font-size: 15px;
}
.bubble {
  width: 402px;
  box-sizing: border-box;
  padding: 11px 16px 12px;
  background: #1c2128;
  border: 1px solid #30363d;
  border-radius: 12px;
  font-size: 13.5px;
  line-height: 1.75;
}
.bubble p {
  margin: 0;
}
.bubble strong {
  font-weight: 700;
}
.bubble strong.calc {
  letter-spacing: 0;
}
.bubble ul {
  margin: 0 0 0.4px;
  padding-left: 17px;
}
.bubble li {
  margin-bottom: 1.4px;
}
.bubble-user {
  padding: 12px 16px;
  background: #1f6feb;
  border-radius: 14px 4px 14px 14px;
  font-size: 13.5px;
  font-weight: 500;
  line-height: 23px;
  color: #fff;
}
.meta {
  margin-top: 6px;
  font-size: 11px;
  line-height: 14px;
  letter-spacing: -0.35px;
  color: #6e7681;
}
.boxes {
  display: flex;
  gap: 8px;
  margin: 12.5px 0 9.5px;
}
.box {
  flex: 1;
  height: 60px;
  box-sizing: border-box;
  padding-top: 7px;
  border: 1px solid;
  border-radius: 6px;
  display: flex;
  flex-direction: column;
  align-items: center;
}
.box.ok {
  background: #1c3224;
  border-color: #234a2c;
}
.box.must {
  background: #1c2d45;
  border-color: #1f3a5f;
}
.box.bad {
  background: #332429;
  border-color: #5c2b2f;
}
.box-top {
  font-size: 11px;
  line-height: 18px;
  color: #6e7681;
}
.box-main {
  margin-top: 2.5px;
  font-size: 13px;
  font-weight: 700;
  line-height: 23px;
}
.ok .box-main {
  color: #3fb950;
}
.must .box-main {
  color: #388bfd;
}
.bad .box-main {
  color: #f85149;
}
.conf {
  margin-top: 11px;
}
.conf-head {
  display: flex;
  justify-content: space-between;
  font-size: 11px;
  line-height: 14px;
  color: #6e7681;
}
.conf-head b {
  color: #388bfd;
  font-weight: 700;
}
.conf-track {
  height: 4px;
  margin-top: 6.7px;
  background: #30363d;
  border-radius: 2px;
  overflow: hidden;
}
.conf-fill {
  height: 100%;
  border-radius: 2px;
  background: linear-gradient(90deg, #388bfd, #3fb950);
}
.refs {
  display: flex;
  flex-wrap: wrap;
  gap: 5px 4.5px;
  margin-top: 8px;
}
.ref {
  height: 26px;
  box-sizing: border-box;
  display: flex;
  align-items: center;
  gap: 4px;
  padding: 0 9px;
  background: #1c2d45;
  border: 1px solid #1f3a5f;
  border-radius: 4px;
  font-size: 11px;
  letter-spacing: -0.5px;
  color: #388bfd;
}
.ref .bi {
  font-size: 12px;
}

/* composer */
.composer {
  flex-shrink: 0;
  padding: 14px 20px 0;
  height: 179px;
  box-sizing: border-box;
  background: #0d1117;
  border-top: 1px solid #30363d;
}
.quick {
  display: flex;
  flex-wrap: wrap;
  gap: 7px 6px;
}
.quick-chip {
  height: 28px;
  display: flex;
  align-items: center;
  gap: 5px;
  padding: 0 12px;
  background: #1c2128;
  border: 1px solid #30363d;
  border-radius: 14px;
  font-size: 11.5px;
  letter-spacing: -0.35px;
  color: #8b949e;
}
.quick-chip .bi {
  font-size: 12px;
}
.input-box {
  height: 52px;
  box-sizing: border-box;
  margin-top: 10px;
  display: flex;
  align-items: center;
  padding: 0 10px 0 9px;
  background: #21262d;
  border: 1px solid #30363d;
  border-radius: 12px;
}
.in-btn {
  width: 36px;
  height: 36px;
  flex-shrink: 0;
  border: 0;
  padding: 0;
  background: none;
  color: #8b949e;
  font-size: 16px;
  display: flex;
  align-items: center;
  justify-content: center;
  margin-right: 4px;
}
.in-btn.clip {
  font-size: 18px;
}
.in-btn.mic {
  margin: 0 6px;
  font-size: 17px;
}
.input-wrap {
  position: relative;
  flex: 1;
  min-width: 0;
  height: 24px;
  margin-top: 10px;
}
.input {
  display: block;
  width: 100%;
  height: 20px;
  box-sizing: border-box;
  padding: 0 15px 0 1px;
  resize: none;
  border: 0;
  outline: 0;
  background: transparent;
  font-size: 13.5px;
  line-height: 20px;
  color: #e6edf3;
  overflow: hidden;
}
.input::placeholder {
  color: #6e7681;
}
.spinner {
  position: absolute;
  top: 0;
  right: 0;
  width: 15px;
  height: 24px;
  background: #fff;
}
.spinner svg {
  display: block;
}
.send {
  width: 34px;
  height: 34px;
  flex-shrink: 0;
  border: 0;
  border-radius: 8px;
  background: #388bfd;
  color: #fff;
  font-size: 17px;
  padding: 0;
  display: flex;
  align-items: center;
  justify-content: center;
}
.foot {
  margin-top: 7px;
  display: flex;
  justify-content: space-between;
  font-size: 11px;
  line-height: 14px;
  letter-spacing: -0.4px;
  color: #6e7681;
}
.foot-left {
  display: flex;
  align-items: center;
  gap: 4px;
}
.foot-left .bi {
  font-size: 12px;
  color: #3fb950;
}

/* right column */
.right {
  position: relative;
  width: 280px;
  box-sizing: border-box;
  flex-shrink: 0;
  background: #161b22;
  border-left: 1px solid #30363d;
  display: flex;
  flex-direction: column;
  min-height: 0;
}
.right-head {
  height: 47px;
  box-sizing: border-box;
  flex-shrink: 0;
  display: flex;
  align-items: center;
  gap: 7px;
  padding: 0 14px 2px;
  border-bottom: 1px solid #30363d;
  font-size: 13px;
  font-weight: 700;
}
.right-head .bi {
  font-size: 13px;
  color: #388bfd;
}
.right-scroll {
  flex: 1;
  min-height: 0;
  overflow-y: auto;
  padding: 12px 15px 12px 12px;
}
.right-thumb {
  top: 47px;
  width: 3px;
  height: 737px;
}
.doc {
  display: flex;
  gap: 9px;
  height: 79px;
  box-sizing: border-box;
  padding: 10px 11px 10px 10px;
  margin-bottom: 8px;
  background: #1c2128;
  border: 1px solid #30363d;
  border-radius: 8px;
}
.doc-icon {
  width: 36px;
  height: 36px;
  flex-shrink: 0;
  border-radius: 8px;
  display: flex;
  align-items: center;
  justify-content: center;
  font-size: 16px;
}
.doc-icon.pdf {
  background: #332429;
  color: #f85149;
}
.doc-icon.doc {
  background: #1c2d45;
  color: #388bfd;
}
.doc-icon.xls {
  background: #1c3224;
  color: #3fb950;
}
.doc-info {
  flex: 1;
  min-width: 0;
}
.doc-name {
  margin-top: 1px;
  font-size: 12px;
  font-weight: 700;
  line-height: 16px;
  letter-spacing: -0.55px;
  white-space: nowrap;
}
.doc-sub {
  margin-top: 2.5px;
  font-size: 11px;
  line-height: 15px;
  letter-spacing: -0.4px;
  color: #6e7681;
}
.doc-rel {
  margin-top: 7px;
  display: flex;
  align-items: center;
  gap: 6px;
}
.doc-track {
  flex: 1;
  height: 3px;
  background: #30363d;
  border-radius: 2px;
  overflow: hidden;
}
.doc-fill {
  height: 100%;
  background: linear-gradient(90deg, #388bfd, #a371f7);
}
.doc-rel b {
  font-size: 11.5px;
  font-weight: 700;
  color: #388bfd;
  line-height: 14px;
}
.right-label {
  margin: 15px 0 10px;
  font-size: 11px;
  font-weight: 700;
  line-height: 14px;
  letter-spacing: 0.2px;
  color: #6e7681;
}
.right-label.first {
  margin: 16px 0 8px;
}
.model {
  padding: 14px 12px 11px;
  background: #1c2128;
  border: 1px solid #30363d;
  border-radius: 8px;
}
.model-top {
  display: flex;
  align-items: center;
  gap: 8px;
  padding-bottom: 12px;
}
.model-logo {
  width: 28px;
  height: 28px;
  border-radius: 6px;
  background: linear-gradient(135deg, #10a37f, #1a7f64);
  display: flex;
  align-items: center;
  justify-content: center;
  font-size: 13px;
  font-weight: 700;
  color: #fff;
}
.model-info {
  flex: 1;
}
.model-name {
  font-size: 13px;
  font-weight: 700;
  line-height: 16px;
}
.model-sub {
  font-size: 11px;
  line-height: 16px;
  color: #6e7681;
}
.model-state {
  display: flex;
  align-items: center;
  gap: 4px;
  padding: 2px 8px;
  background: #1c3224;
  border: 1px solid #2a4a33;
  border-radius: 11px;
  font-size: 11px;
  font-weight: 700;
  color: #3fb950;
  line-height: 16px;
}
.model-state i {
  width: 5px;
  height: 5px;
  border-radius: 50%;
  background: #3fb950;
}
.model-row {
  height: 31px;
  box-sizing: border-box;
  display: flex;
  align-items: center;
  gap: 5px;
  border-top: 1px solid #21262d;
  font-size: 12px;
  color: #8b949e;
}
.model-row .bi {
  font-size: 12px;
}
.model-key {
  flex: 1;
}
.model-row b {
  font-weight: 700;
  color: #e6edf3;
}
.model-row b.green {
  color: #3fb950;
}
.suggest {
  width: 100%;
  height: 31px;
  margin-bottom: 6px;
  display: flex;
  align-items: center;
  gap: 6px;
  padding: 0 10px;
  background: #1c2128;
  border: 1px solid #30363d;
  border-radius: 6px;
  font-size: 12px;
  letter-spacing: -0.5px;
  color: #8b949e;
  text-align: left;
}
.suggest .bi {
  font-size: 12px;
  color: #388bfd;
}
</style>
